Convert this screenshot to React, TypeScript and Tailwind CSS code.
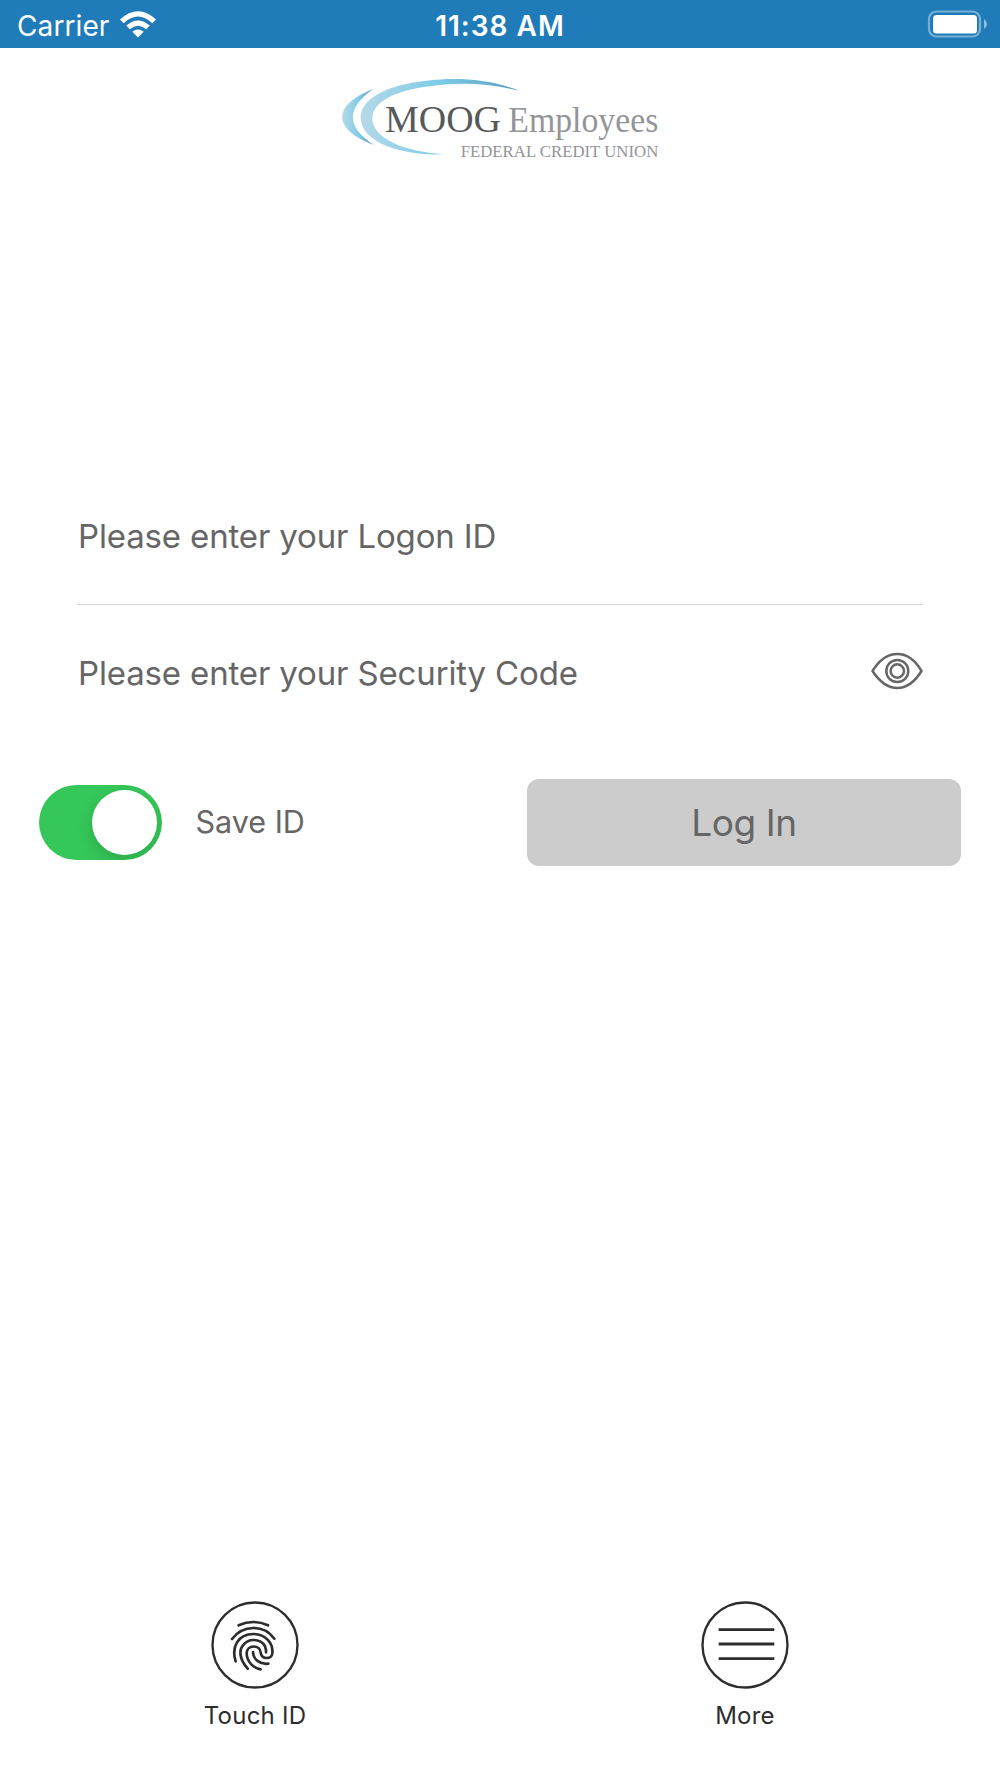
import type { ReactNode } from "react";

function StatusBar() {
  return (
    <header className="grid h-12 grid-cols-3 items-center bg-[#1f7cb9] pt-1 text-white">
      <div className="flex items-center gap-[11px] pl-[17px]">
        <span className="text-[28px] leading-8 tracking-[0.1px]">Carrier</span>
        <svg viewBox="0 0 36 27" className="mb-1 h-[27px] w-9" fill="currentColor">
          <path d="M0 8.6Q18-8 36 8.6L32.3 12.2Q18-1 3.7 12.2Z" />
          <path d="M6.2 14.6Q18 4.2 29.8 14.6L26.2 18.2Q18 11.2 9.8 18.2Z" />
          <path d="M12.3 20.7Q18 16.3 23.7 20.7L18 26.5Z" />
        </svg>
      </div>
      <span className="text-center text-[28px] leading-8 font-semibold tracking-[1px]">11:38 AM</span>
      <div className="flex justify-end pr-[13px]">
        <svg viewBox="0 0 60 30" className="mb-1 h-[30px] w-[60px]">
          <rect x="2" y="2.5" width="51" height="25" rx="7.5" fill="none" stroke="#79b0d6" strokeWidth="2.2" />
          <rect x="6" y="6" width="44" height="18.5" rx="3.5" fill="#fff" />
          <path d="M57 10Q60 12 60 15Q60 18 57 20Z" fill="#8fbddc" />
        </svg>
      </div>
    </header>
  );
}

function Logo() {
  return (
    <svg
      viewBox="0 0 1020 300"
      className="h-[100px] w-[340px] overflow-visible"
      fontFamily="'Liberation Serif', serif"
    >
      <defs>
        <linearGradient id="swoosh" x1="0" x2="1">
          <stop offset="0" stopColor="#b5d9e8" />
          <stop offset="0.5" stopColor="#7ccbe8" />
          <stop offset="1" stopColor="#5b9ebd" />
        </linearGradient>
        <linearGradient id="crescent" x1="0" x2="1">
          <stop offset="0" stopColor="#b5d9e8" />
          <stop offset="0.5" stopColor="#84cde8" />
          <stop offset="1" stopColor="#5e9fc0" />
        </linearGradient>
      </defs>
      <path d="M130 57C5 105 5 178 132 225C48 170 48 115 130 57Z" fill="url(#crescent)" />
      <path
        d="M567 62C475 26 380 22 290 32C165 45 92 88 92 142C92 210 195 258 342 253C215 245 127 202 127 145C127 94 200 60 305 48C400 36 480 41 567 62Z"
        fill="url(#swoosh)"
      />
      <text x="165" y="185" fontSize="115" fill="#58595b" textLength="348" lengthAdjust="spacingAndGlyphs">
        MOOG
      </text>
      <text x="535" y="185" fontSize="106" fill="#939598" textLength="450" lengthAdjust="spacingAndGlyphs">
        Employees
      </text>
      <text x="392" y="260" fontSize="53" fill="#939598" textLength="593" lengthAdjust="spacingAndGlyphs">
        FEDERAL CREDIT UNION
      </text>
    </svg>
  );
}

function EyeIcon() {
  return (
    <svg viewBox="0 0 52 38" className="mb-[3px] h-[38px] w-[52px]" fill="none" stroke="#666" strokeWidth="2.5">
      <path d="M1.5 19Q12 2 26.3 2T50.5 19Q40 36 26.3 36T1.5 19Z" strokeLinejoin="round" />
      <circle cx="26.3" cy="19" r="11" />
      <circle cx="26.3" cy="19" r="6.7" />
    </svg>
  );
}

function TabButton({ label, children }: { label: string; children: ReactNode }) {
  return (
    <button className="flex w-[120px] flex-col items-center text-[#2d2d2d]">
      <svg
        viewBox="64 33 264 264"
        className="h-[88px] w-[88px]"
        fill="none"
        stroke="currentColor"
        strokeWidth="8"
      >
        <circle cx="196" cy="165" r="127.5" strokeWidth="7" />
        {children}
      </svg>
      <span className="mt-[11px] text-2xl leading-8 tracking-[0.25px] whitespace-nowrap">{label}</span>
    </button>
  );
}

export default function App() {
  return (
    <div className="flex h-[1778px] w-[1000px] flex-col bg-white font-['Inter',sans-serif] text-[#666]">
      <StatusBar />
      <div className="mt-[22px] flex justify-center">
        <Logo />
      </div>

      <main className="mt-[297px]">
        <div className="mx-[77px]">
          <div className="flex h-[138px] items-center border-b-[1.5px] border-[#d5d5d5]">
            <span className="pl-px text-[33px] leading-10 tracking-[-0.15px]">Please enter your Logon ID</span>
          </div>
          <div className="flex h-[136px] items-center justify-between pb-px">
            <span className="pl-px text-[33px] leading-10 tracking-[-0.15px]">
              Please enter your Security Code
            </span>
            <EyeIcon />
          </div>
        </div>

        <div className="mt-[38px] mr-[39px] ml-[38.5px] flex items-center">
          <button
            role="switch"
            aria-checked="true"
            className="flex h-[75px] w-[123px] items-center justify-end overflow-hidden rounded-full bg-[#35c759] pr-[5px]"
          >
            <span className="h-[65px] w-[65px] rounded-full bg-white shadow-[0_6px_16px_rgba(0,0,0,0.15)]" />
          </button>
          <span className="mb-px ml-[34px] text-[30.5px] leading-9">Save ID</span>
          <button className="ml-auto h-[87px] w-[434px] rounded-xl bg-[#ccc] text-[37px] tracking-[-0.4px]">
            Log In
          </button>
        </div>
      </main>

      <nav className="mt-auto mb-[46px] flex justify-between pr-[195px] pl-[195px]">
        <TabButton label="Touch ID">
          <g strokeLinecap="round">
            <path d="M147 106Q191 86 235 106" />
            <path d="M127 147C160 103 223 103 254 146" />
            <path d="M138 214C124 170 146 132 191 132C228 132 251 160 248 190C246 209 217 209 213 188C213 163 171 163 171 190C171 214 190 234 213 238" />
            <path d="M174 236C148 207 148 179 160 166C180 140 224 147 229 180L229 187" />
            <path d="M190 186C191 209 212 224 236 221" />
          </g>
        </TabButton>
        <TabButton label="More">
          <path d="M117 119H284M117 162H284M117 206H284" strokeWidth="8.5" />
        </TabButton>
      </nav>
    </div>
  );
}
